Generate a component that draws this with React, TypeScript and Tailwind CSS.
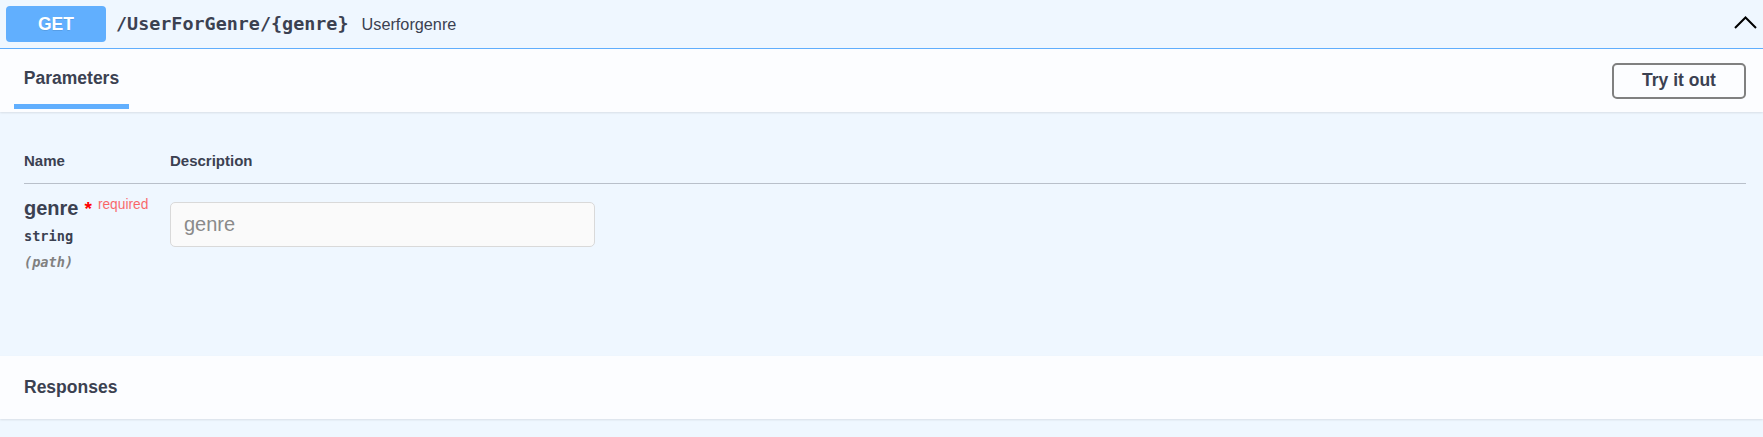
export default function App() {
  return (
    <div className="w-[1763px] h-[437px] overflow-hidden bg-[#eff7ff] font-['Liberation_Sans',Arial,sans-serif] text-[#3b4151]">
      {/* summary */}
      <div className="flex items-center h-[49px] px-[6px] border-b border-[#61affe]">
        <div className="w-[100px] h-[36px] rounded-[4px] bg-[#61affe] text-white font-bold text-[17.5px] flex items-center justify-center [text-shadow:0_1px_0_rgba(0,0,0,0.1)]">
          GET
        </div>
        <span className="ml-[10px] font-['DejaVu_Sans_Mono',monospace] font-bold text-[18.4px] tracking-[0px]">
          /UserForGenre/&#123;genre&#125;
        </span>
        <span className="ml-[13px] text-[16.25px]">Userforgenre</span>
        <div className="flex-1" />
        <svg width="23" height="13" viewBox="0 0 23 13" className="mb-[3px]">
          <polyline points="1,12 11.5,1.5 22,12" fill="none" stroke="#000" strokeWidth="2" />
        </svg>
      </div>

      {/* parameters header */}
      <div className="flex items-stretch justify-between h-[63px] bg-white/80 shadow-[0_1px_2px_rgba(0,0,0,0.1)] pr-[17px]">
        <div className="ml-[14px] w-[115px] flex flex-col pb-[3px]">
          <div className="flex-1 flex items-center justify-center font-bold text-[17.5px] pt-[3px]">Parameters</div>
          <div className="h-[5px] bg-[#61affe]" />
        </div>
        <div className="flex items-center">
          <button className="w-[134px] h-[36px] border-2 border-[#808080] rounded-[5px] bg-transparent font-bold text-[17.5px] text-[#3b4151]">
            Try it out
          </button>
        </div>
      </div>

      {/* parameters table */}
      <div className="h-[244px] pt-[37px] pl-[24px] pr-[17px]">
        <div className="flex h-[35px] pb-[11px] border-b border-[#3b4151]/30 text-[15px] font-bold leading-[24px]">
          <div className="w-[146px]">Name</div>
          <div>Description</div>
        </div>
        <div className="flex">
          <div className="w-[146px] pt-[12px]">
            <div className="flex items-start leading-[24px]">
              <span className="font-bold text-[20px]">genre</span>
              <span className="ml-[6px] text-[19px] font-bold text-[#ff0000] leading-[24px] mt-[1px]">*</span>
              <span className="ml-[6px] text-[13.75px] text-[#ff0000]/60 leading-[16px] mt-[1px]">required</span>
            </div>
            <div className="mt-[5px] font-['DejaVu_Sans_Mono',monospace] font-bold text-[13.6px] leading-[20px]">string</div>
            <div className="mt-[6px] font-['DejaVu_Sans_Mono',monospace] font-bold italic text-[13.6px] leading-[20px] text-[#808080]">(path)</div>
          </div>
          <div className="pt-[18px]">
            <input
              placeholder="genre"
              className="w-[425px] h-[45px] border border-[#d9d9d9] rounded-[5px] bg-[#fafafa] px-[13px] text-[20px] placeholder:text-[#8a8a8a] outline-none"
            />
          </div>
        </div>
      </div>

      {/* responses header */}
      <div className="h-[63px] bg-white/80 shadow-[0_1px_2px_rgba(0,0,0,0.1)] flex items-center pl-[24px] font-bold text-[17.5px]">
        Responses
      </div>
    </div>
  )
}
